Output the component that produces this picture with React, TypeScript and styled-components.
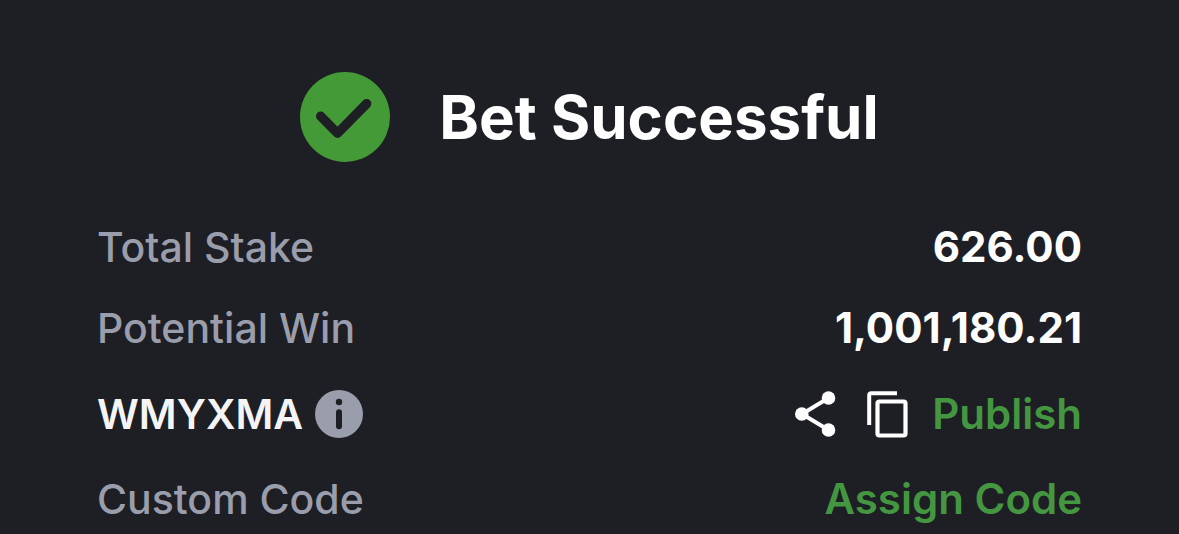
import React from 'react';
import styled, { createGlobalStyle } from 'styled-components';

const GlobalStyle = createGlobalStyle`
  * { box-sizing: border-box; }
  body {
    margin: 0;
    background: #1e1f25;
    font-family: Inter, "Liberation Sans", sans-serif;
  }
`;

const Page = styled.main`
  padding: 72px 97px 0;
`;

const Header = styled.header`
  display: flex;
  align-items: center;
  justify-content: center;
  gap: 49px;
  height: 90px;
  margin-bottom: 47px;
`;

const Title = styled.h1`
  margin: 0;
  font-size: 60px;
  line-height: 72px;
  font-weight: 700;
  color: #ffffff;
  white-space: nowrap;
`;

const Details = styled.dl`
  margin: 0;
`;

const Row = styled.div<{ $height: number }>`
  display: flex;
  align-items: center;
  justify-content: space-between;
  height: ${({ $height }) => $height}px;
`;

const Label = styled.dt<{ $strong?: boolean }>`
  display: flex;
  align-items: center;
  gap: 12px;
  font-size: 41px;
  line-height: 48px;
  font-weight: ${({ $strong }) => ($strong ? 600 : 500)};
  color: ${({ $strong }) => ($strong ? '#f4f4f6' : '#9a9eac')};
`;

const Value = styled.dd`
  display: flex;
  align-items: center;
  margin: 0;
  font-size: 42px;
  line-height: 48px;
  font-weight: 700;
  color: #ffffff;
`;

const IconButton = styled.button`
  display: flex;
  padding: 0;
  border: 0;
  background: none;
  color: #ffffff;
  cursor: pointer;
`;

const Action = styled.button`
  padding: 0;
  border: 0;
  background: none;
  font: inherit;
  font-weight: 600;
  color: #449641;
  cursor: pointer;
`;

const Icons = styled.div`
  display: flex;
  align-items: center;
  gap: 31px;
  margin-right: 24px;
`;

export default function App() {
  return (
    <Page>
      <GlobalStyle />
      <Header>
        <svg width="90" height="90" viewBox="0 0 90 90" aria-hidden="true">
          <circle cx="45" cy="45" r="45" fill="#449a37" />
          <path d="M20.7 44.2L37.5 61.2L66.7 31.6" fill="none" stroke="#1e1f25" strokeWidth="9.4" strokeLinecap="round" strokeLinejoin="round" />
        </svg>
        <Title>Bet Successful</Title>
      </Header>
      <Details>
        <Row $height={76}>
          <Label>Total Stake</Label>
          <Value>626.00</Value>
        </Row>
        <Row $height={86}>
          <Label>Potential Win</Label>
          <Value>1,001,180.21</Value>
        </Row>
        <Row $height={86}>
          <Label $strong>
            WMYXMA
            <IconButton aria-label="Code information">
              <svg width="48" height="48" viewBox="0 0 48 48">
                <circle cx="24" cy="24" r="24" fill="#9a9eac" />
                <circle cx="24" cy="12" r="3.2" fill="#1e1f25" />
                <path d="M24 22.2v14" fill="none" stroke="#1e1f25" strokeWidth="6" strokeLinecap="round" />
              </svg>
            </IconButton>
          </Label>
          <Value>
            <Icons>
              <IconButton aria-label="Share">
                <svg width="41" height="46" viewBox="0 0 41 46">
                  <path d="M33.5 7L7 23l26.5 16" fill="none" stroke="#fff" strokeWidth="4" />
                  <circle cx="33.5" cy="7" r="6.8" fill="#fff" />
                  <circle cx="6.8" cy="23" r="6.8" fill="#fff" />
                  <circle cx="33.5" cy="39" r="6.8" fill="#fff" />
                </svg>
              </IconButton>
              <IconButton aria-label="Copy">
                <svg width="41" height="47" viewBox="0 0 41 47">
                  <path d="M2.2 34V4.2a2 2 0 0 1 2-2H30" fill="none" stroke="#fff" strokeWidth="4" />
                  <rect x="10.5" y="10.5" width="28" height="34" rx="2" fill="none" stroke="#fff" strokeWidth="4.2" />
                </svg>
              </IconButton>
            </Icons>
            <Action>Publish</Action>
          </Value>
        </Row>
        <Row $height={84}>
          <Label>Custom Code</Label>
          <Value>
            <Action>Assign Code</Action>
          </Value>
        </Row>
      </Details>
    </Page>
  );
}
